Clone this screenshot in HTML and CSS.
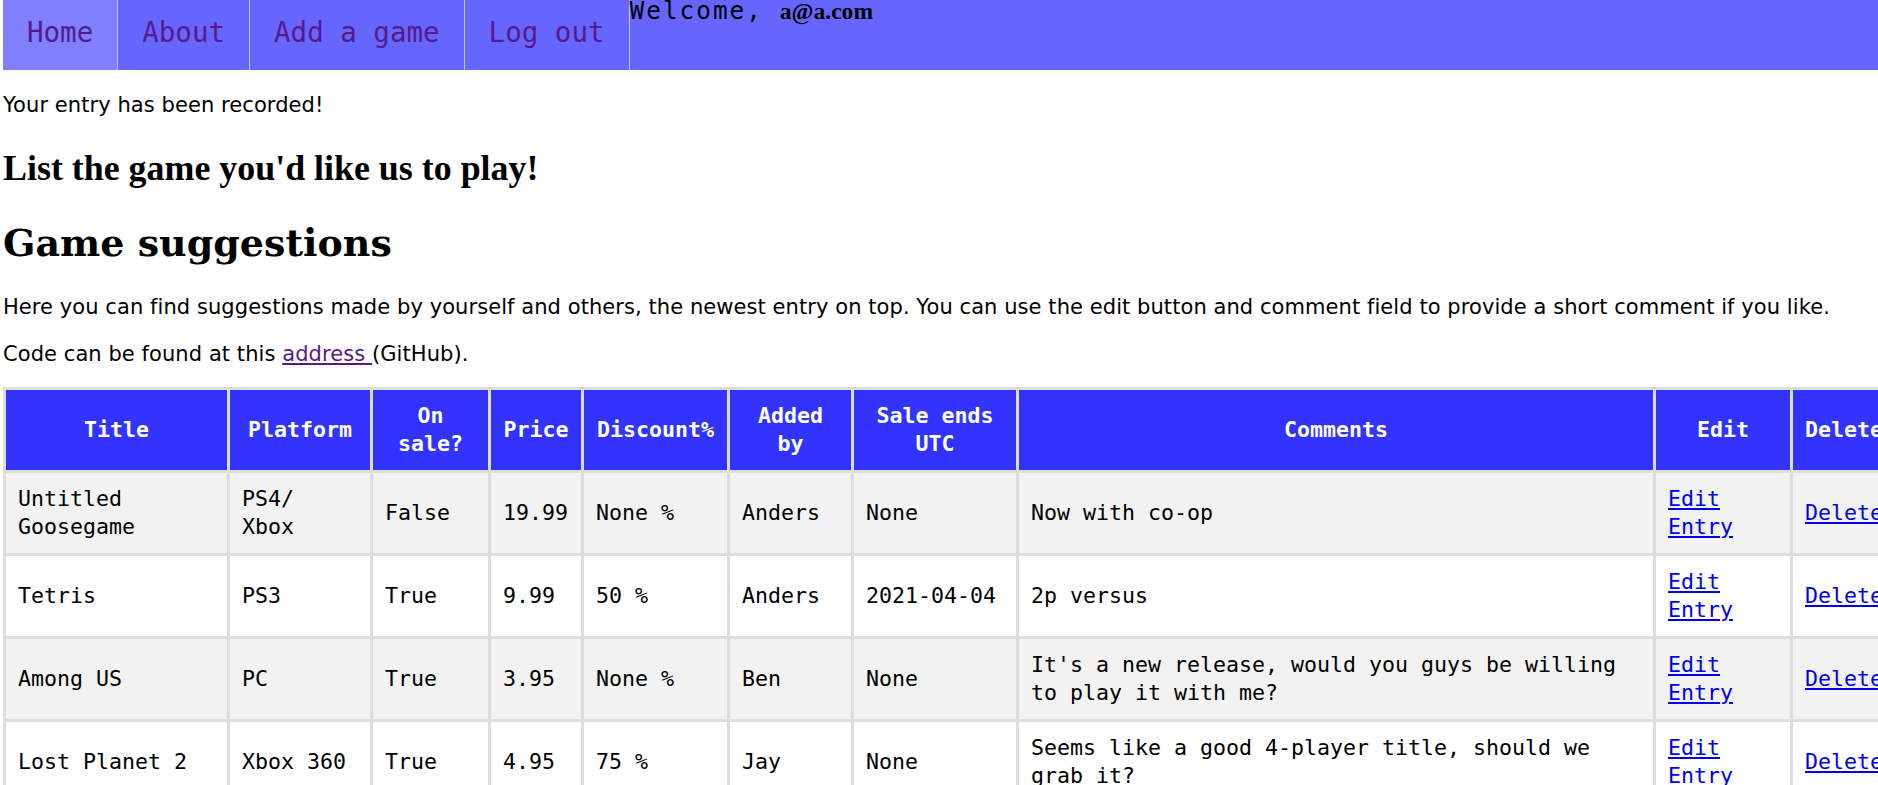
FILE: index.html
```html
<!DOCTYPE html>
<html lang="en">
<head>
<meta charset="utf-8">
<title>Game suggestions</title>
<link rel="stylesheet" href="styles.css">
</head>
<body>
<nav class="topnav">
  <ul class="menu">
    <li class="menu-item active"><a href="#">Home</a></li>
    <li class="menu-item"><a href="#">About</a></li>
    <li class="menu-item"><a href="#">Add a game</a></li>
    <li class="menu-item"><a href="#">Log out</a></li>
  </ul>
  <div class="welcome">Welcome, <b class="user">a@a.com</b></div>
</nav>
<main class="content">
  <p class="flash">Your entry has been recorded!</p>
  <h2 class="form-title">List the game you'd like us to play!</h2>
  <h1 class="page-title">Game suggestions</h1>
  <p class="intro">Here you can find suggestions made by yourself and others, the newest entry on top. You can use the edit button and comment field to provide a short comment if you like.</p>
  <p class="source">Code can be found at this <a class="visited" href="#">address </a>(GitHub).</p>
  <table class="games">
    <thead>
      <tr>
        <th class="c-title">Title</th>
        <th class="c-platform">Platform</th>
        <th class="c-sale">On sale?</th>
        <th class="c-price">Price</th>
        <th class="c-discount">Discount%</th>
        <th class="c-added">Added by</th>
        <th class="c-ends">Sale ends UTC</th>
        <th class="c-comments">Comments</th>
        <th class="c-edit">Edit</th>
        <th class="c-delete">Delete</th>
      </tr>
    </thead>
    <tbody>
      <tr>
        <td>Untitled Goosegame</td>
        <td>PS4/ Xbox</td>
        <td>False</td>
        <td>19.99</td>
        <td>None %</td>
        <td>Anders</td>
        <td>None</td>
        <td>Now with co-op</td>
        <td><a href="#">Edit Entry</a></td>
        <td><a href="#">Delete</a></td>
      </tr>
      <tr>
        <td>Tetris</td>
        <td>PS3</td>
        <td>True</td>
        <td>9.99</td>
        <td>50 %</td>
        <td>Anders</td>
        <td>2021-04-04</td>
        <td>2p versus</td>
        <td><a href="#">Edit Entry</a></td>
        <td><a href="#">Delete</a></td>
      </tr>
      <tr>
        <td>Among US</td>
        <td>PC</td>
        <td>True</td>
        <td>3.95</td>
        <td>None %</td>
        <td>Ben</td>
        <td>None</td>
        <td>It's a new release, would you guys be willing to play it with me?</td>
        <td><a href="#">Edit Entry</a></td>
        <td><a href="#">Delete</a></td>
      </tr>
      <tr>
        <td>Lost Planet 2</td>
        <td>Xbox 360</td>
        <td>True</td>
        <td>4.95</td>
        <td>75 %</td>
        <td>Jay</td>
        <td>None</td>
        <td>Seems like a good 4-player title, should we grab it?</td>
        <td><a href="#">Edit Entry</a></td>
        <td><a href="#">Delete</a></td>
      </tr>
    </tbody>
  </table>
</main>
</body>
</html>
```

FILE: styles.css
```css
html, body {
  margin: 0;
  padding: 0;
}

body {
  padding-left: 3px;
  font-family: "DejaVu Sans", Verdana, sans-serif;
  font-size: 21px;
  letter-spacing: 0.07px;
  color: #000;
  background: #fff;
}

/* ---------- top navigation ---------- */
.topnav {
  display: flex;
  align-items: flex-start;
  height: 70px;
  background: #6666ff;
  letter-spacing: 0;
}

.menu {
  display: flex;
  list-style: none;
  margin: 0;
  padding: 0;
}

.menu-item {
  border-right: 1px solid #c4c4d4;
}

.menu-item a {
  display: block;
  padding: 0 24px 5px;
  line-height: 65px;
  font-family: "DejaVu Sans Mono", monospace;
  font-size: 27.5px;
  color: #551a8b;
  text-decoration: none;
}

.menu-item.active {
  background: #8080ff;
}

.welcome {
  font-family: "DejaVu Sans Mono", monospace;
  font-size: 24.4px;
  letter-spacing: 2px;
  line-height: 22px;
  color: #000;
}

.user {
  font-family: "Liberation Serif", "Times New Roman", serif;
  font-size: 23.6px;
  font-weight: bold;
  letter-spacing: 0;
}

/* ---------- content ---------- */
.content {
  display: flex;
  flex-direction: column;
  align-items: flex-start;
}

.flash {
  margin: 24.2px 0 0;
  line-height: 23px;
}

.form-title {
  margin: 31.5px 0 0;
  font: bold 35.9px/38px "Liberation Serif", "Times New Roman", serif;
  letter-spacing: 0;
}

.page-title {
  margin: 34.2px 0 0;
  font: bold 38px/44px "DejaVu Serif", Georgia, serif;
  letter-spacing: 0;
}

.intro {
  margin: 31.5px 0 0;
  line-height: 23px;
}

.source {
  margin: 24px 0 0;
  line-height: 23px;
}

.visited {
  color: #551a8b;
}

/* ---------- table ---------- */
.games {
  margin-top: 20.3px;
  border-collapse: separate;
  border-spacing: 3px;
  background: #dddddd;
  table-layout: fixed;
  width: 1895px;
  flex: none;
  font-family: "DejaVu Sans Mono", monospace;
  font-size: 21.6px;
  line-height: 28px;
  letter-spacing: 0;
}

.games th,
.games td {
  box-sizing: border-box;
  padding: 12px;
  vertical-align: middle;
}

.games th {
  background: #3333ff;
  color: #fff;
  font-weight: bold;
  text-align: center;
}

.games td {
  background: #fff;
  text-align: left;
}

.games tbody tr:nth-child(odd) td {
  background: #f2f2f2;
}

.games a {
  color: #0000ee;
  text-decoration: underline;
}

.c-title { width: 221px; }
.c-platform { width: 140px; }
.c-sale { width: 115px; }
.c-price { width: 90px; }
.c-discount { width: 143px; }
.c-added { width: 121px; }
.c-ends { width: 162px; }
.c-comments { width: 634px; }
.c-edit { width: 134px; }
.c-delete { width: 102px; }
```
